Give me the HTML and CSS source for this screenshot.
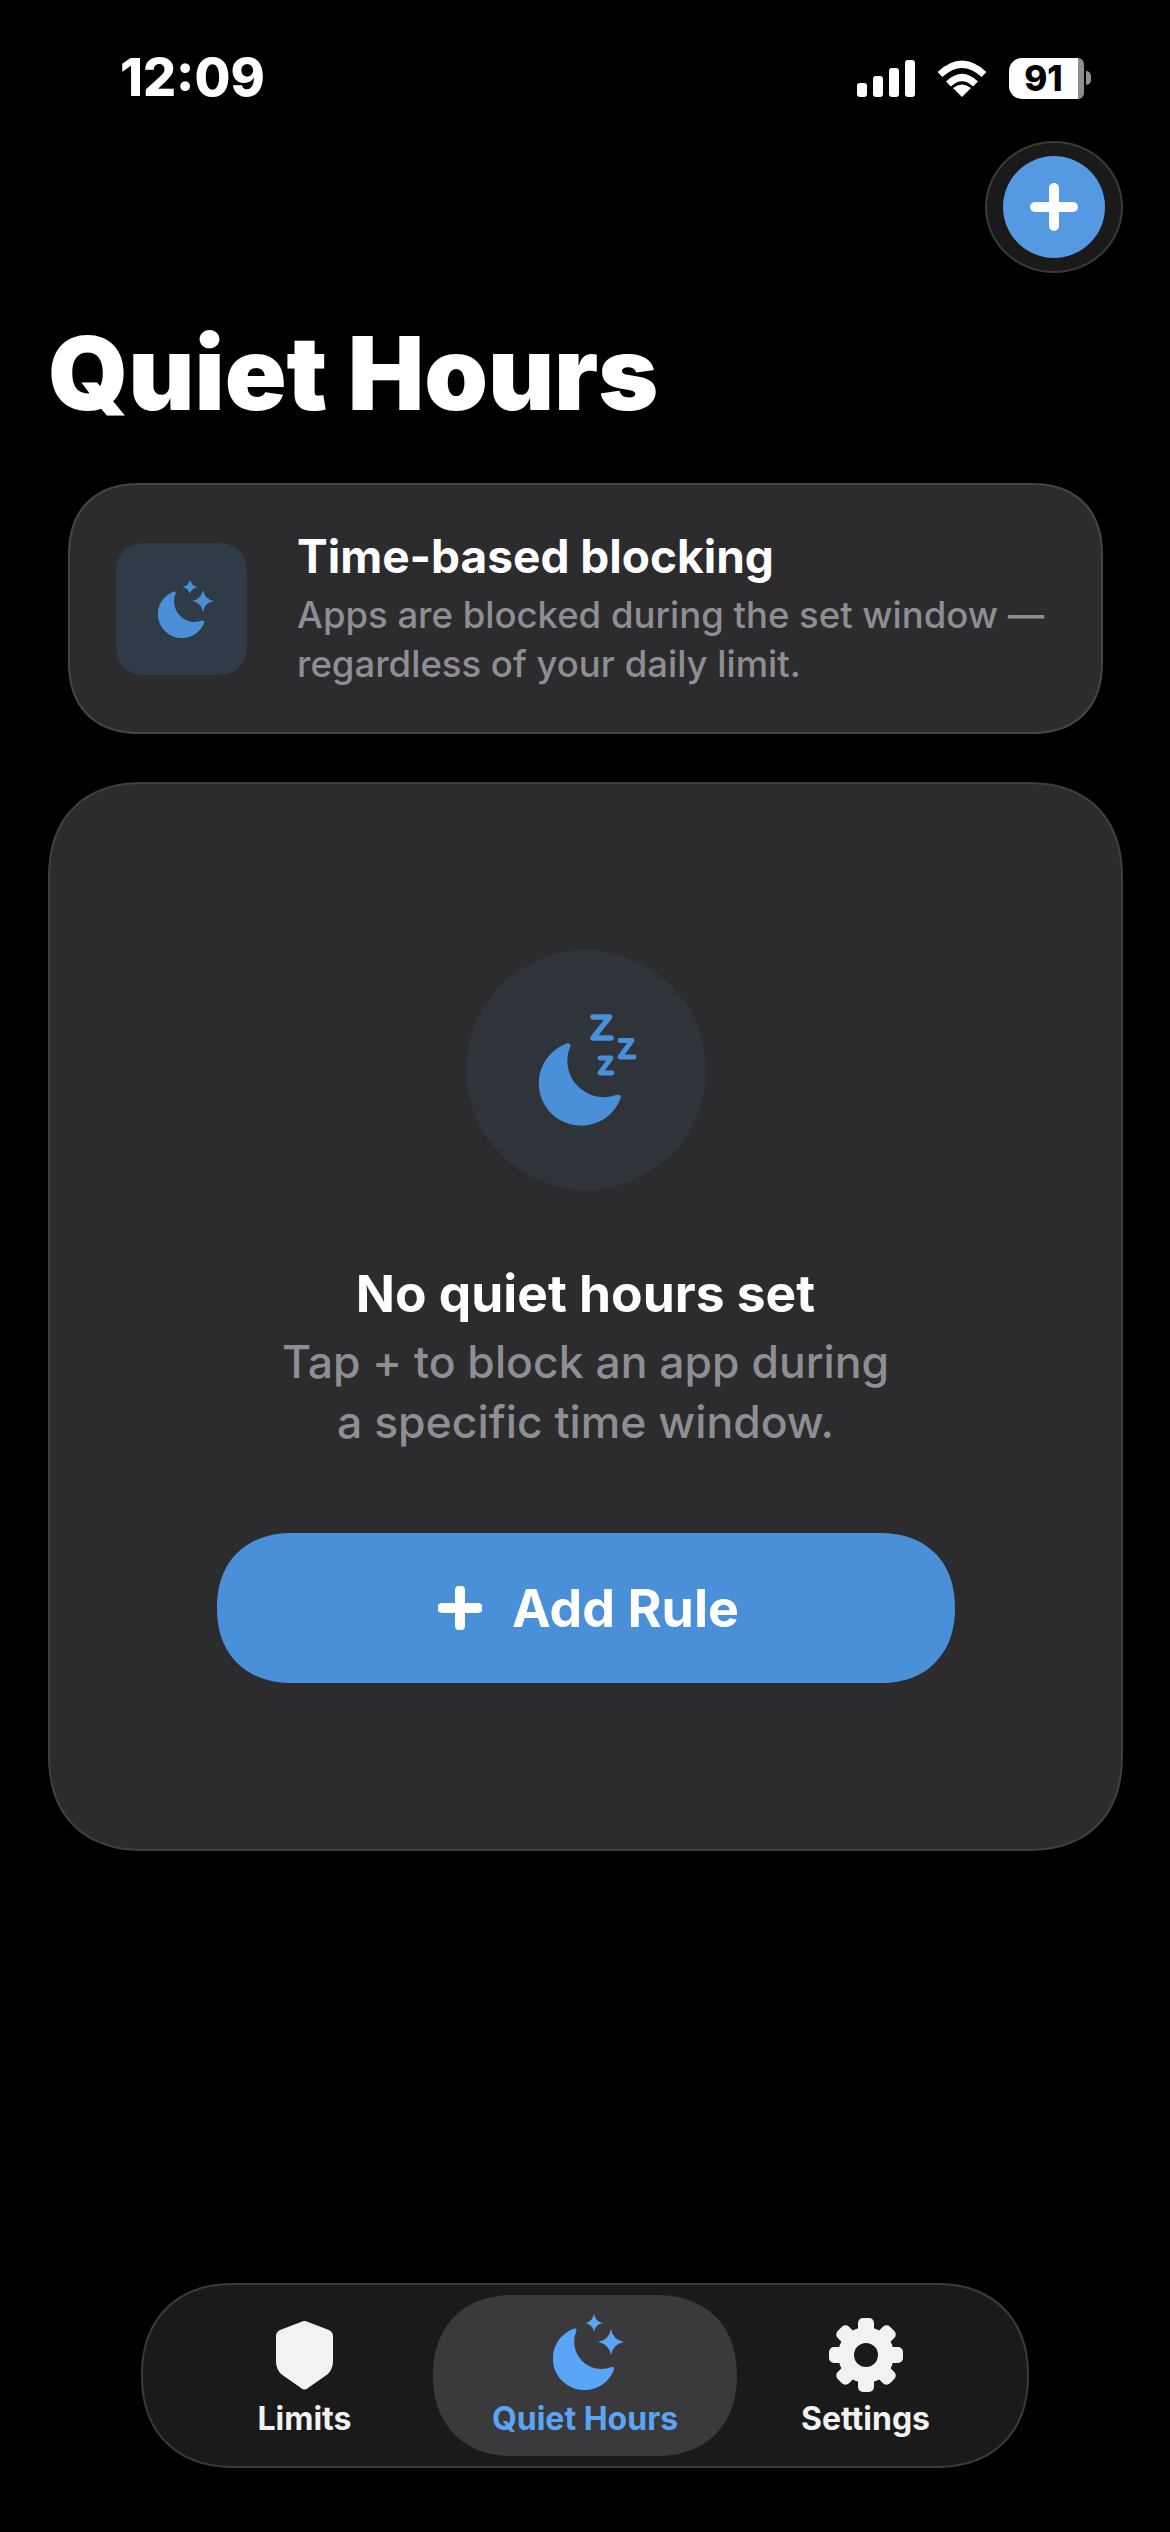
FILE: index.html
```html
<!DOCTYPE html>
<html lang="en">

<head>
    <meta charset="UTF-8">
    <meta name="viewport" content="width=device-width, initial-scale=1.0">
    <title>Quiet Hours</title>
    <link rel="stylesheet" href="styles.css">
</head>
<body>
    <svg class="icon-defs" width="0" height="0" aria-hidden="true">
        <defs>
            <path id="moon" d="M34 1A51 51 0 1 0 98.500 67Q99 62 94 63A44 44 0 0 1 38 4Q38 0 34 1Z" />
            <path id="star" d="M0-10Q1.500-1.500 10 0Q1.500 1.500 0 10Q-1.500 1.500-10 0Q-1.500-1.500 0-10Z" />
        </defs>
    </svg>

    <div class="status-bar">
        <span class="status-time">12:09</span>
        <div class="status-icons">
            <svg class="signal-icon" width="58" height="37" viewBox="0 0 58 37">
                <rect x="0" y="23" width="10" height="14" rx="3" />
                <rect x="16" y="16" width="10" height="21" rx="3" />
                <rect x="32" y="8" width="10" height="29" rx="3" />
                <rect x="48" y="0" width="10" height="37" rx="3" />
            </svg>
            <svg class="wifi-icon" width="50" height="37" viewBox="0 0 50 37">
                <path d="M3 14.500Q25-6 47 14.500" />
                <path d="M11.500 24Q25 11 38.500 24" />
                <path class="wifi-dot" d="M25 37L16 28Q25 21 34 28Z" />
            </svg>
            <div class="battery">
                <span class="battery-level">91</span>
                <span class="battery-rest"></span>
                <span class="battery-nub"></span>
            </div>
        </div>
    </div>

    <div class="top-actions">
        <button class="fab" type="button" aria-label="Add">
            <span class="fab-inner">
                <svg width="48" height="48" viewBox="0 0 48 48">
                    <path d="M24 5V43M5 24H43" />
                </svg>
            </span>
        </button>
    </div>

    <h1 class="page-title">Quiet Hours</h1>

    <section class="info-card">
        <div class="info-icon">
            <svg width="131" height="132" viewBox="0 0 131 132">
                <use href="#moon" transform="translate(42 48) scale(.47)" />
                <use href="#star" transform="translate(74 44) scale(.75)" />
                <use href="#star" transform="translate(87 58) scale(1.1)" />
            </svg>
        </div>
        <div class="info-text">
            <h2>Time-based blocking</h2>
            <p>Apps are blocked during the set window — regardless of your daily limit.</p>
        </div>
    </section>

    <section class="empty-card">
        <div class="empty-icon">
            <svg width="240" height="240" viewBox="0 0 240 240">
                <use href="#moon" transform="translate(73 92.500) scale(.83)" />
                <path class="zzz" stroke-width="5.500" d="M127 67H143.500L127 88H145" />
                <path class="zzz" stroke-width="4.800" d="M154 90.500H166L154 107H168" />
                <path class="zzz" stroke-width="4.800" d="M134 108H145L134 123H146" />
            </svg>
        </div>
        <h2>No quiet hours set</h2>
        <p>Tap + to block an app during<br>a specific time window.</p>
        <button class="add-btn" type="button">
            <svg width="44" height="44" viewBox="0 0 44 44">
                <path d="M22 4V40M4 22H40" />
            </svg>
            <span>Add Rule</span>
        </button>
    </section>

    <nav class="tab-bar">
        <a class="tab" href="#">
            <svg width="57" height="80" viewBox="0 0 57 80">
                <path d="M28.500 7Q30 7 32 8L53 16Q57 18 57 22V47Q57 55 52 60L32 74Q28.500 77 25 74L5 60Q0 55 0 47V22Q0 18 4 16L25 8Q27 7 28.500 7Z" />
            </svg>
            <span>Limits</span>
        </a>
        <a class="tab active" href="#">
            <svg class="tab-moon" width="72" height="80" viewBox="0 0 72 80">
                <use href="#moon" transform="translate(0 14) scale(.62)" />
                <use href="#star" transform="translate(41 9) scale(.9)" />
                <use href="#star" transform="translate(58 28) scale(1.3)" />
            </svg>
            <span>Quiet Hours</span>
        </a>
        <a class="tab" href="#">
            <svg width="76" height="80" viewBox="0 0 76 80">
                <g transform="translate(38 41)">
                    <circle r="28" />
                    <rect x="-8" y="-37" width="16" height="74" rx="5" />
                    <rect x="-8" y="-37" width="16" height="74" rx="5" transform="rotate(45)" />
                    <rect x="-8" y="-37" width="16" height="74" rx="5" transform="rotate(90)" />
                    <rect x="-8" y="-37" width="16" height="74" rx="5" transform="rotate(135)" />
                    <circle class="gear-hole" r="12" />
                </g>
            </svg>
            <span>Settings</span>
        </a>
    </nav>
</body>

</html>
```

FILE: styles.css
```css
* {
    box-sizing: border-box;
}

body {
    font-family: Inter, "Liberation Sans", sans-serif;
    margin: 0;
    padding: 0;
    display: flex;
    flex-direction: column;
    height: 2532px;
    overflow: hidden;
    background-color: #000;
    color: #fff;
}

h1,
h2,
p {
    margin: 0;
}

.icon-defs {
    display: block;
    flex: none;
}

.status-bar {
    display: flex;
    justify-content: space-between;
    align-items: center;
    height: 44px;
    margin-top: 56px;
    padding: 0 79px 0 120px;
}

.status-time {
    font-size: 52px;
    font-weight: 800;
    line-height: 44px;
}

.status-icons {
    display: flex;
    align-items: center;
    gap: 22px;
}

.signal-icon {
    fill: #fff;
}

.wifi-icon path {
    fill: none;
    stroke: #fff;
    stroke-width: 7;
}

.wifi-icon .wifi-dot {
    fill: #fff;
    stroke: none;
}

.battery {
    display: flex;
    align-items: center;
    width: 82px;
    height: 41px;
}

.battery-level {
    width: 69px;
    height: 41px;
    background-color: #fff;
    border-radius: 13px 0 0 13px;
    color: #000;
    font-size: 35px;
    font-weight: 800;
    line-height: 41px;
    text-align: center;
}

.battery-rest {
    width: 6px;
    height: 41px;
    background-color: #8e8e8e;
    border-radius: 0 10px 10px 0;
}

.battery-nub {
    width: 5px;
    height: 14px;
    margin-left: 2px;
    background-color: #8e8e8e;
    border-radius: 0 6px 6px 0;
}

.top-actions {
    display: flex;
    justify-content: flex-end;
    margin-top: 41px;
    padding-right: 47px;
}

.fab {
    display: flex;
    align-items: center;
    justify-content: center;
    width: 138px;
    height: 132px;
    padding: 0;
    background-color: #1a1a1a;
    border: 2px solid #3a3a3a;
    border-radius: 50%;
}

.fab-inner {
    display: flex;
    align-items: center;
    justify-content: center;
    width: 102px;
    height: 102px;
    background-color: #5599e2;
    border-radius: 50%;
}

.fab svg path,
.add-btn svg path {
    fill: none;
    stroke: #fff;
    stroke-width: 10;
    stroke-linecap: round;
}

.page-title {
    margin-top: 40px;
    padding-left: 48px;
    font-size: 102px;
    font-weight: 900;
    line-height: 120px;
}

.info-card {
    display: flex;
    align-items: center;
    gap: 50px;
    width: 1035px;
    height: 251px;
    margin: 50px 0 0 68px;
    padding-left: 46px;
    background-color: #2c2c2e;
    border: 2px solid #454547;
    border-radius: 72px;
    corner-shape: superellipse(1.2);
}

.info-icon {
    flex: none;
    width: 131px;
    height: 132px;
    background-color: #2f3b47;
    border-radius: 30px;
    corner-shape: superellipse(1.2);
}

.info-icon svg,
.empty-icon svg {
    display: block;
    fill: #4a90d9;
}

.info-text h2 {
    font-size: 46px;
    font-weight: 700;
    line-height: 54px;
}

.info-text p {
    margin-top: 8px;
    color: #8e8e93;
    font-size: 36.500px;
    font-weight: 500;
    line-height: 49px;
}

.empty-card {
    display: flex;
    flex-direction: column;
    align-items: center;
    width: 1075px;
    height: 1069px;
    margin: 48px 0 0 48px;
    padding-top: 166px;
    background-color: #2c2c2e;
    border: 2px solid #3f3f41;
    border-radius: 96px;
    corner-shape: superellipse(1.2);
    text-align: center;
}

.empty-icon {
    width: 240px;
    height: 240px;
    background-color: #2f343a;
    border-radius: 50%;
}

.zzz {
    fill: none;
    stroke: #4a90d9;
    stroke-linecap: round;
    stroke-linejoin: round;
}

.empty-card h2 {
    margin-top: 73px;
    font-size: 51.500px;
    font-weight: 700;
    line-height: 60px;
}

.empty-card p {
    margin-top: 9px;
    color: #8e8e93;
    font-size: 44.500px;
    font-weight: 500;
    line-height: 60px;
}

.add-btn {
    display: flex;
    align-items: center;
    justify-content: center;
    gap: 30px;
    width: 738px;
    height: 150px;
    margin-top: 81px;
    padding-left: 12px;
    background-color: #4a90d9;
    border: none;
    border-radius: 75px;
    corner-shape: superellipse(1.15);
    color: #fff;
    font-family: inherit;
    font-size: 52px;
    font-weight: 700;
}

.tab-bar {
    display: grid;
    grid-template-columns: 257px 304px 257px;
    align-items: stretch;
    width: 888px;
    height: 185px;
    margin: auto 0 64px 141px;
    padding: 10px 33px;
    background-color: #1a1a1a;
    border: 2px solid #3a3a3a;
    border-radius: 92px;
    corner-shape: superellipse(1.15);
}

.tab {
    display: flex;
    flex-direction: column;
    align-items: center;
    padding-top: 19px;
    border-radius: 81px;
    corner-shape: superellipse(1.15);
    color: #f2f2f2;
    font-size: 32px;
    font-weight: 700;
    line-height: 38px;
    text-decoration: none;
}

.tab svg {
    display: block;
    fill: #f2f2f2;
    margin-bottom: 6px;
}

.tab .gear-hole {
    fill: #1a1a1a;
}

.tab.active {
    background-color: #3a3a3c;
    color: #5aa5f5;
}

.tab .tab-moon {
    margin-left: 8px;
    fill: #5aa5f5;
}
```
